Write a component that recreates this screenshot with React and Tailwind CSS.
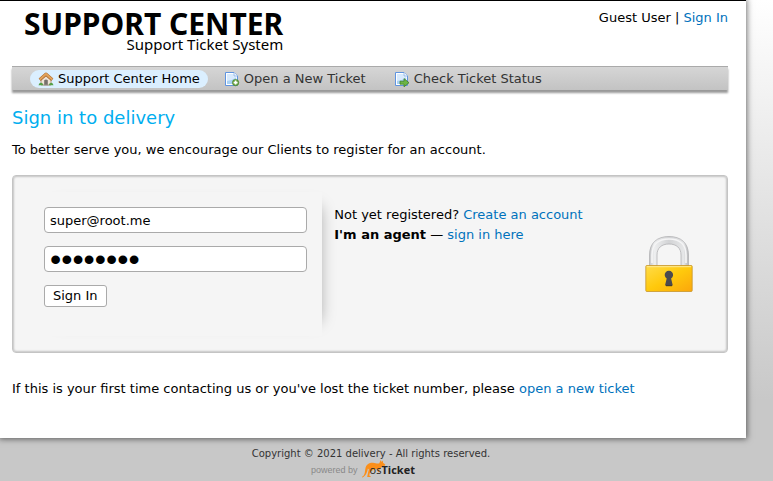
import React from "react";

function HomeIcon() {
  return (
    <svg width="16" height="16" viewBox="0 0 16 16" aria-hidden="true">
      <path d="M3 8.200 8 3.600l5 4.600V14H3z" fill="#efe3d6" stroke="#a98a6c" strokeWidth=".8" />
      <path d="M6.200 14V9.200q1.800-1.600 3.600 0V14z" fill="#77706b" />
      <path d="M1.700 8.800 8 3.200l6.300 5.600" fill="none" stroke="#a9682c" strokeWidth="3.200" strokeLinejoin="round" />
      <path d="M1.800 8.400 8 2.900l6.200 5.500" fill="none" stroke="#e3a35c" strokeWidth="2" strokeLinejoin="round" />
      <path d="M.5 14.300q.4-2.900 2.700-2.500 2 .2 2.100 2.500zM10.800 14.300q.2-2.600 2.400-2.500 2 0 2.300 2.500z" fill="#55a046" />
      <path d="M5.600 14.200h5" stroke="#a9a39c" strokeWidth="1" />
    </svg>
  );
}

function PageIcon({ children }) {
  return (
    <svg width="16" height="16" viewBox="0 0 16 16" aria-hidden="true">
      <path d="M1.500 1.500h8.500l3.500 3.500v9.500h-12z" fill="#fff" stroke="#5f94e0" />
      <path d="M3 3h6.500v2.500h2.700V13H3z" fill="#d8eafc" />
      <path d="M3 10q5-.5 9.200-3.500V13H3z" fill="#a9d2f5" />
      <path d="M10 1.500V5h3.500" fill="#f2f8fe" stroke="#7fabe6" strokeWidth=".8" />
      {children}
    </svg>
  );
}

function NewPageIcon() {
  return (
    <PageIcon>
      <circle cx="11.600" cy="11.600" r="3.200" fill="#5f9f35" stroke="#4a7f2a" strokeWidth=".6" />
      <path d="M11.600 9.600v4M9.600 11.600h4" stroke="#fff" strokeWidth="1.700" />
    </PageIcon>
  );
}

function StatusPageIcon() {
  return (
    <PageIcon>
      <path d="M6 10.200h4V7.600l5 4.100-5 4.100v-2.600H6z" fill="#6cb544" stroke="#3f7d26" strokeWidth=".8" />
    </PageIcon>
  );
}

function LockIcon() {
  return (
    <svg width="48" height="58" viewBox="0 0 48 58" aria-hidden="true">
      <defs>
        <linearGradient id="gold" x1="0" y1="0" x2="1" y2="1">
          <stop offset="0" stopColor="#ffdc4a" />
          <stop offset=".5" stopColor="#ffc90c" />
          <stop offset="1" stopColor="#fba60c" />
        </linearGradient>
        <linearGradient id="steel" x1="0" x2="1">
          <stop offset="0" stopColor="#c4c5c7" />
          <stop offset=".12" stopColor="#eeeff0" />
          <stop offset=".5" stopColor="#d2d3d5" />
          <stop offset=".88" stopColor="#e6e7e8" />
          <stop offset="1" stopColor="#b5b6b8" />
        </linearGradient>
      </defs>
      <path
        d="M4.500 31V20C4.500 8 12 1.500 24 1.500S43.500 8 43.500 20v11h-7.500V20c0-7-4.500-11-12-11s-12 4-12 11v11z"
        fill="url(#steel)"
        stroke="#b2b3b5"
        strokeWidth=".8"
      />
      <path d="M7 28V20C7 10 13 4 24 4s17 6 17 16v8" fill="none" stroke="#f5f5f6" strokeWidth="1.600" />
      <rect x=".8" y="30.500" width="46.400" height="26" rx="1" fill="url(#gold)" stroke="#c7962d" strokeWidth=".8" />
      <path d="M1.800 31.700h44.400" stroke="#ffea94" strokeWidth="1" />
      <path d="m21.700 43.500-1.700 7h7.800l-1.700-7a4.200 4.200 0 1 0-4.400 0z" fill="#4b4a50" />
      <path d="M21 50.700h6" stroke="#2f2e33" />
    </svg>
  );
}

function KangarooIcon() {
  return (
    <svg width="24" height="18" viewBox="0 0 24 18" aria-hidden="true">
      <path
        d="M0 16.800c3-1.200 2.800-5 3.400-8.300C4 4.500 7.400 2.500 11 2.700c2.400.1 4.300 1.300 6.300.6L18.700 0l1 2L21 .6v2.200l2.300 1.700-.5 1.200-2.700.2c-.9 1.200-1.300 2.700-2.700 3.300l-.4 3-1.200-.2.2-2.600-2-.3c-2-.1-3.400 1-4.600 2.200l-1.600 1.900-.6 2.300 1.500.7-.2.800H5.200l.8-4.200.9-3.200-1-1C5.200 12 4.200 16.500 0 17.600z"
        fill="#fb8f1a"
      />
    </svg>
  );
}

const tabs = [
  { label: "Support Center Home", Icon: HomeIcon, active: true },
  { label: "Open a New Ticket", Icon: NewPageIcon },
  { label: "Check Ticket Status", Icon: StatusPageIcon },
];

function Header() {
  return (
    <header className="flex items-start justify-between pl-3">
      <a href="#home" className="flex h-[65px] flex-col items-end pt-[10px] font-['Noto_Sans','Open_Sans',sans-serif] text-black">
        <span className="text-[30px] leading-[26px] font-bold">SUPPORT CENTER</span>
        <span className="text-[15px] leading-[14px]">Support Ticket System</span>
      </a>
      <p className="pt-[7px] leading-5">
        Guest User | <a href="#signin" className="text-[#0072bc]">Sign In</a>
      </p>
    </header>
  );
}

function Nav() {
  return (
    <nav className="flex h-6 items-center gap-1 border-t border-[#aaa] bg-linear-to-b from-[#d6d6d6] to-[#c3c3c3] px-[18px] shadow-[0_3px_2px_rgba(0,0,0,0.4)]">
      {tabs.map(({ label, Icon, active }) => (
        <a
          key={label}
          href="#tab"
          className={
            active
              ? "flex h-[18px] items-center gap-1 rounded-full bg-[#dbefff] px-2 text-black"
              : "flex h-[18px] items-center gap-1 rounded-full px-3 text-[#333]"
          }
        >
          <Icon />
          {label}
        </a>
      ))}
    </nav>
  );
}

function LoginPanel() {
  const field = "h-[26px] w-full rounded border border-[#aaa] bg-white px-[5px] text-black outline-none";
  return (
    <section className="mt-[15px] flex rounded border border-[#c4c4c4] bg-[#f5f5f5] p-4 shadow-[inset_0_0_2px_1px_rgba(0,0,0,0.2)]">
      <form
        className="flex h-36 w-[43%] flex-col items-start gap-[13px] p-[15px] shadow-[12px_0_15px_-15px_rgba(0,0,0,0.4)]"
        onSubmit={(event) => event.preventDefault()}
      >
        <input className={field + " text-[13px]"} type="text" aria-label="Email or Username" defaultValue="super@root.me" />
        <input
          className={field + " font-['Liberation_Sans',sans-serif] text-[32px]"}
          type="password"
          aria-label="Password"
          defaultValue="password"
        />
        <button className="h-[22px] rounded-[3px] border border-[#aaa] bg-white px-2 leading-5" type="submit">
          Sign In
        </button>
      </form>
      <div className="flex flex-1 justify-between pt-[13px] pr-[18px] pl-3">
        <div className="leading-5">
          <p>
            Not yet registered? <a href="#register" className="text-[#0072bc]">Create an account</a>
          </p>
          <p>
            <b>I'm an agent</b> — <a href="#agent" className="text-[#0072bc]">sign in here</a>
          </p>
        </div>
        <div className="pt-[30px]">
          <LockIcon />
        </div>
      </div>
    </section>
  );
}

export default function App() {
  return (
    <div className="min-h-screen bg-[#c8c8c8] bg-[linear-gradient(#fff,#c8c8c8_400px)] font-['DejaVu_Sans',sans-serif] text-[13px] text-black">
      <div className="border-t border-black bg-white pr-[18px] pb-[39px] pl-3 mr-[27px] shadow-[0_0_6px_1px_rgba(0,0,0,0.55)]">
        <Header />
        <Nav />
        <main>
          <h1 className="mt-4 text-lg leading-6 text-[#00aeef]">Sign in to delivery</h1>
          <p className="mt-[10px] leading-5">
            To better serve you, we encourage our Clients to register for an account.
          </p>
          <LoginPanel />
          <p className="mt-[26px] leading-5">
            If this is your first time contacting us or you've lost the ticket number, please{" "}
            <a href="#open" className="text-[#0072bc]">open a new ticket</a>
          </p>
        </main>
      </div>
      <footer className="mr-[27px] flex flex-col items-center pt-2 pr-1 text-[10px] text-[#333]">
        <p className="leading-4">Copyright © 2021 delivery - All rights reserved.</p>
        <a href="#osticket" className="flex h-5 items-end -mt-1 pr-4">
          <span className="mr-1 font-['Liberation_Sans',sans-serif] text-[9px] leading-4 text-[#888]">powered by</span>
          <KangarooIcon />
          <span className="-ml-4 font-['Open_Sans',sans-serif] text-[11px] leading-4 text-[#222]">
            os<b>Ticket</b>
          </span>
        </a>
      </footer>
    </div>
  );
}
